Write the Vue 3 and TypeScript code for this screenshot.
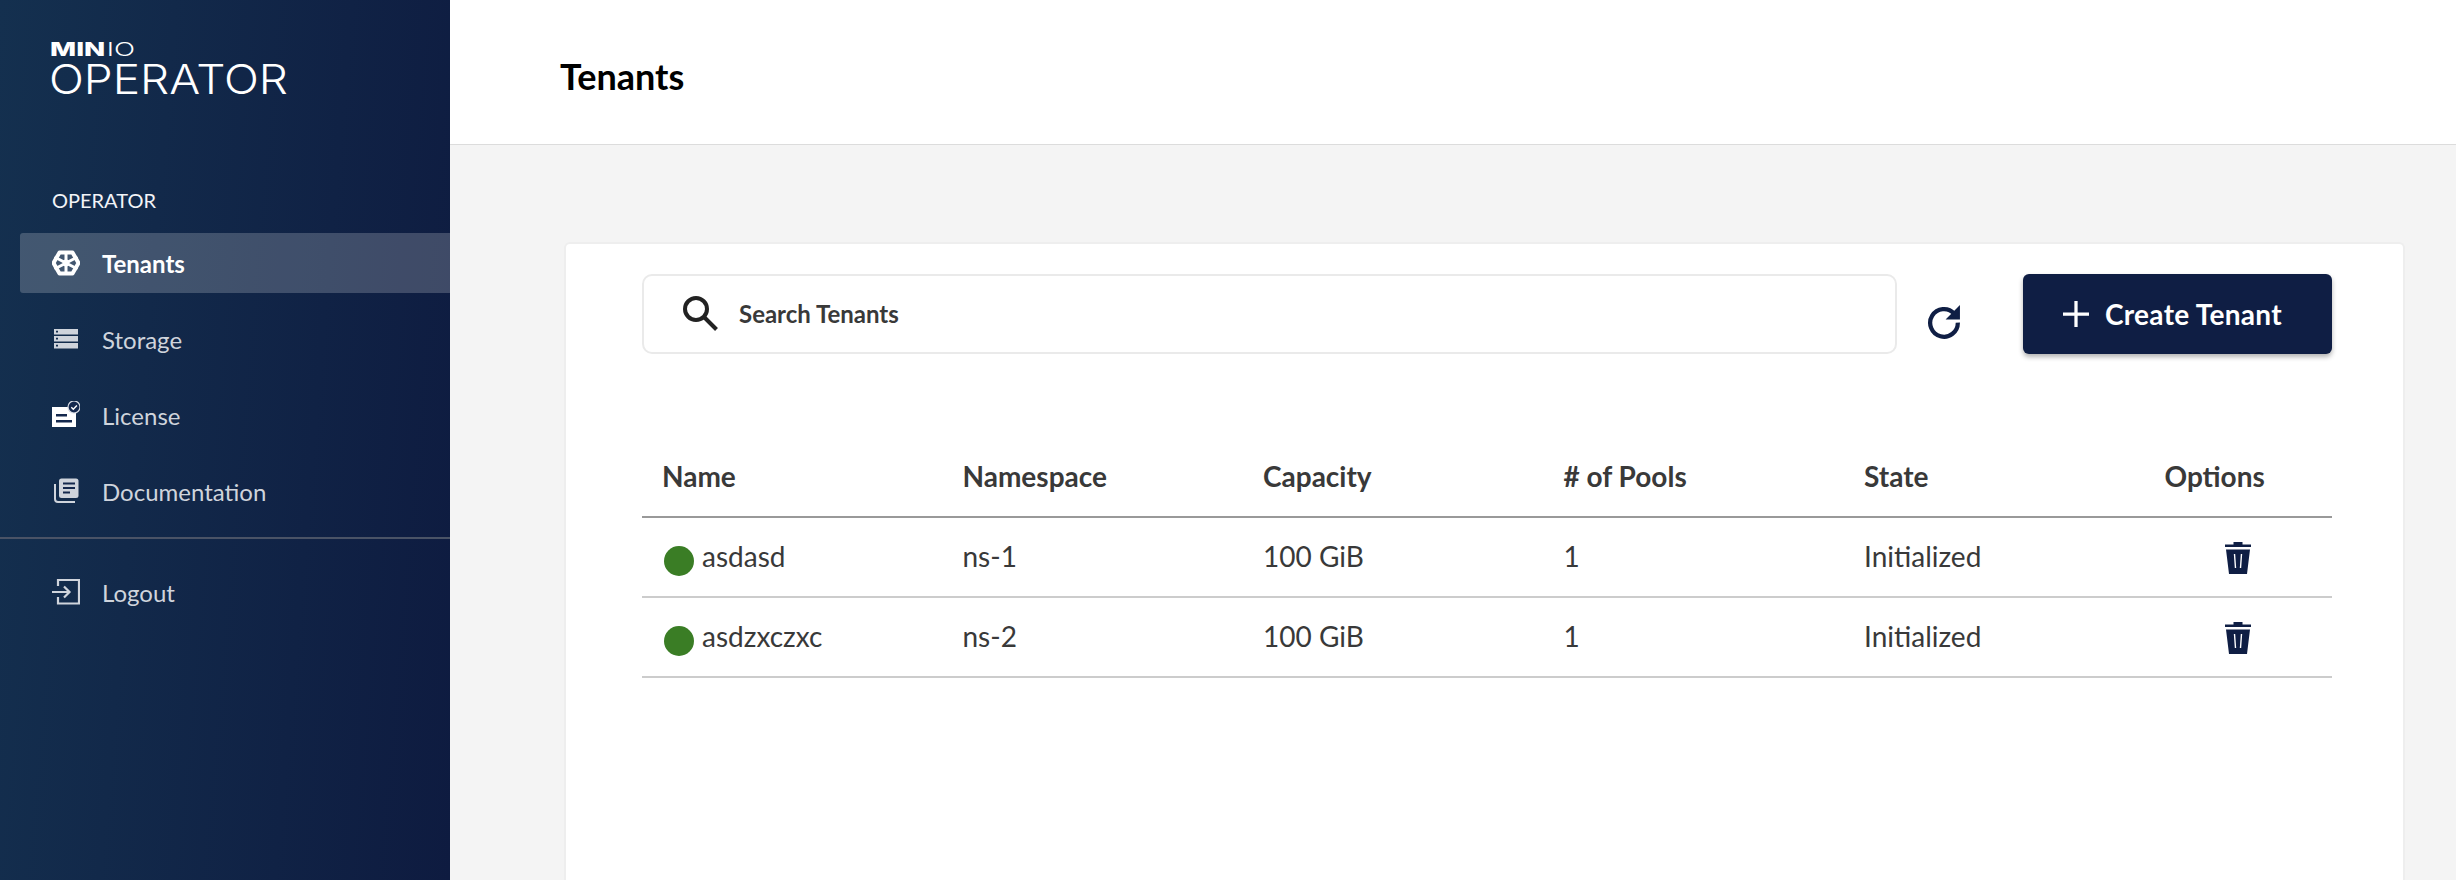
<script setup lang="ts">
interface NavItem { label: string; icon: string }
interface Tenant { name: string; ns: string; capacity: string; pools: number; state: string }
const items: NavItem[] = [
  { label: 'Storage', icon: 'storage' },
  { label: 'License', icon: 'license' },
  { label: 'Documentation', icon: 'docs' },
]
const tenants: Tenant[] = [
  { name: 'asdasd', ns: 'ns-1', capacity: '100 GiB', pools: 1, state: 'Initialized' },
  { name: 'asdzxczxc', ns: 'ns-2', capacity: '100 GiB', pools: 1, state: 'Initialized' },
]
const columns = ['Name', 'Namespace', 'Capacity', '# of Pools', 'State', 'Options']
</script>

<template>
  <div class="app">
    <aside class="sidebar">
      <div class="logo">
        <div class="logo-top"><b>MIN</b><span>IO</span></div>
        <div class="logo-main">OPERATOR</div>
      </div>
      <div class="section">OPERATOR</div>
      <a class="nav active">
        <svg class="ic" viewBox="0 0 28 28" fill="none">
          <path d="M7.500 3.500h13L26.500 14l-6 10.500h-13L1.500 14z" stroke="#fff" stroke-width="4" stroke-linejoin="round" />
          <path d="M14 2v24M2.500 8l23 12M25.500 8l-23 12" stroke="#fff" stroke-width="3" />
          <circle cx="14" cy="14" r="3.400" fill="#fff" />
        </svg>
        <span>Tenants</span>
      </a>
      <a v-for="it in items" :key="it.label" class="nav">
        <svg v-if="it.icon === 'storage'" class="ic" viewBox="0 0 28 28">
          <path fill="#cfd4dc" fill-rule="evenodd" d="M2 4h24v5.500H2zM4 5.800v1.800h2V5.800zM2 11h24v5.500H2zM4 12.800v1.800h2v-1.800zM2 18h24v5.500H2zM4 19.800v1.800h2v-1.800z" />
        </svg>
        <svg v-else-if="it.icon === 'license'" class="ic" viewBox="0 0 28 28">
          <path fill="#fff" d="M0 6h24v20H0z" />
          <path fill="#14284d" d="M4 13h11v2.500H4zM4 19h16v2.500H4z" />
          <circle cx="22" cy="6" r="6" fill="#14284d" stroke="#d6dae2" stroke-width="1.200" />
          <path d="M19.300 6.200l2 2 3.600-3.800" fill="none" stroke="#fff" stroke-width="1.400" />
        </svg>
        <svg v-else class="ic" viewBox="0 0 28 28">
          <path fill="none" stroke="#cfd4dc" stroke-width="2" d="M3 7v15a3 3 0 0 0 3 3h17" />
          <rect x="7" y="1.500" width="19.500" height="19.500" rx="2.500" fill="#cfd4dc" />
          <path stroke="#14284d" stroke-width="2" d="M11 6.500h12M11 11h12M11 15.500h7" />
        </svg>
        <span>{{ it.label }}</span>
      </a>
      <div class="divider"></div>
      <a class="nav">
        <svg class="ic" viewBox="0 0 28 28" fill="none" stroke="#cfd4dc" stroke-width="2.200">
          <path d="M6 8V2h21v23.500H6V19" />
          <path d="M0 14h17M12 8.500l5.500 5.500-5.500 5.500" />
        </svg>
        <span>Logout</span>
      </a>
    </aside>

    <main class="main">
      <header class="topbar"><h1>Tenants</h1></header>
      <section class="card">
        <div class="toolbar">
          <div class="search">
            <svg class="search-ic" viewBox="0 0 36 36" fill="none" stroke="#222" stroke-width="4">
              <circle cx="14" cy="14" r="11" />
              <path d="M22 22l12.500 12.500" />
            </svg>
            <span>Search Tenants</span>
          </div>
          <svg class="refresh" viewBox="0 0 32 32" fill="none">
            <path d="M25.600 9.500A13 13 0 1 0 29 18" stroke="#0f1e44" stroke-width="4" />
            <path fill="#0f1e44" d="M31 1.500V15H17.500z" />
          </svg>
          <button class="create" type="button">
            <svg class="plus" viewBox="0 0 24 24"><path fill="#fff" d="M10.500 0h3v10.500H24v3H13.500V24h-3V13.500H0v-3h10.500z" /></svg>
            <span>Create Tenant</span>
          </button>
        </div>
        <table class="tbl">
          <thead>
            <tr><th v-for="c in columns" :key="c">{{ c }}</th></tr>
          </thead>
          <tbody>
            <tr v-for="t in tenants" :key="t.name">
              <td><span class="namecell"><i class="dot"></i>{{ t.name }}</span></td>
              <td>{{ t.ns }}</td>
              <td>{{ t.capacity }}</td>
              <td>{{ t.pools }}</td>
              <td>{{ t.state }}</td>
              <td class="opt">
                <svg class="trash" viewBox="0 0 26 32">
                  <path fill="#0f1e44" d="M8.500 0h9v2.500H26V5H0V2.500h8.500zM1 7.500h24L22 32H4z" />
                  <path stroke="#fff" stroke-width="1.400" d="M9.500 12l1 14M16.500 12l-1 14" />
                </svg>
              </td>
            </tr>
          </tbody>
        </table>
      </section>
    </main>
  </div>
</template>

<style>
html, body { margin: 0; background: #f4f4f4; }
</style>

<style scoped>
.app { display: flex; width: 2456px; height: 880px; overflow: hidden; font-family: Lato, "Liberation Sans", sans-serif; }
.sidebar { width: 450px; flex: none; background: linear-gradient(95deg, #14304f 0%, #0e1b40 100%); color: #fff; display: flex; flex-direction: column; }
.logo { padding: 41px 0 0 50px; height: 97px; box-sizing: content-box; }
.logo-top { font-family: Inter, sans-serif; font-size: 19px; line-height: 18px; height: 20px; display: flex; gap: 1px; transform-origin: left; transform: scaleX(1.46); width: 58px; white-space: nowrap; }
.logo-top b { font-weight: 800; }
.logo-top span { font-weight: 300; }
.logo-main { font-family: Inter, sans-serif; font-weight: 300; font-size: 41px; line-height: 32px; margin: 2px 0 0 -1px; transform-origin: left; transform: scaleX(1.12); white-space: nowrap; }
.section { font-size: 20px; line-height: 24px; margin: 50px 0 0 52px; height: 45px; color: #f2f4f7; }
.nav { display: flex; align-items: center; height: 60px; margin-left: 20px; padding-left: 32px; margin-bottom: 16px; font-size: 24px; color: #cfd4dc; gap: 22px; border-radius: 3px 0 0 3px; }
.nav.active { background: rgba(255, 255, 255, 0.2); color: #fff; font-weight: 700; }
.ic { width: 28px; height: 28px; flex: none; }
.divider { height: 2px; background: #4a5366; margin: 0 0 23px; }
.main { flex: 1; min-width: 0; display: flex; flex-direction: column; }
.topbar { height: 145px; box-sizing: border-box; padding-top: 8px; flex: none; background: #fff; border-bottom: 1px solid #dcdcdc; display: flex; align-items: center; padding-left: 110px; }
.topbar h1 { margin: 0; font-size: 36px; font-weight: 700; color: #000; }
.card { margin: 97px 51px 0 114px; flex: 1; background: #fff; border: 2px solid #eeeeee; border-bottom: 0; border-radius: 6px 6px 0 0; padding: 30px 71px 0 76px; }
.toolbar { display: flex; align-items: flex-start; }
.search { width: 1255px; height: 80px; box-sizing: border-box; flex: none; border: 2px solid #eaeaea; border-radius: 10px; display: flex; align-items: center; padding: 0 0 2px 38px; gap: 21px; font-size: 24px; font-weight: 700; color: #393939; }
.search-ic { width: 36px; height: 36px; flex: none; }
.refresh { width: 34px; height: 37px; flex: none; margin: 28px 0 0 30px; }
.create { margin-left: 62px; width: 309px; height: 80px; flex: none; background: #0f1e44; color: #fff; border: 0; border-radius: 6px; box-shadow: 0 3px 5px rgba(0, 0, 0, 0.3); display: flex; align-items: center; justify-content: center; gap: 16px; font-family: Lato, sans-serif; font-size: 28px; font-weight: 700; letter-spacing: 0.3px; padding: 0 10px 0 0; }
.plus { width: 26px; height: 26px; flex: none; }
.tbl { margin-top: 81px; width: 1690px; table-layout: fixed; border-collapse: collapse; color: #393939; }
.tbl th { height: 82px; text-align: left; padding: 0 0 0 20px; font-size: 28px; font-weight: 700; border-bottom: 2px solid #999; width: 300.5px; box-sizing: border-box; }
.tbl th:last-child { width: auto; }
.tbl td { height: 80px; padding: 0 0 2px 20px; font-size: 28px; border-bottom: 2px solid #ccc; box-sizing: border-box; }
.namecell { display: flex; align-items: center; gap: 8px; }
.dot { width: 30px; height: 30px; border-radius: 50%; background: #3a7d25; margin: 10px 0 0 2px; flex: none; }
.opt { text-align: left; }
.trash { width: 26px; height: 32px; display: block; margin: 3px 0 0 60px; }
</style>
